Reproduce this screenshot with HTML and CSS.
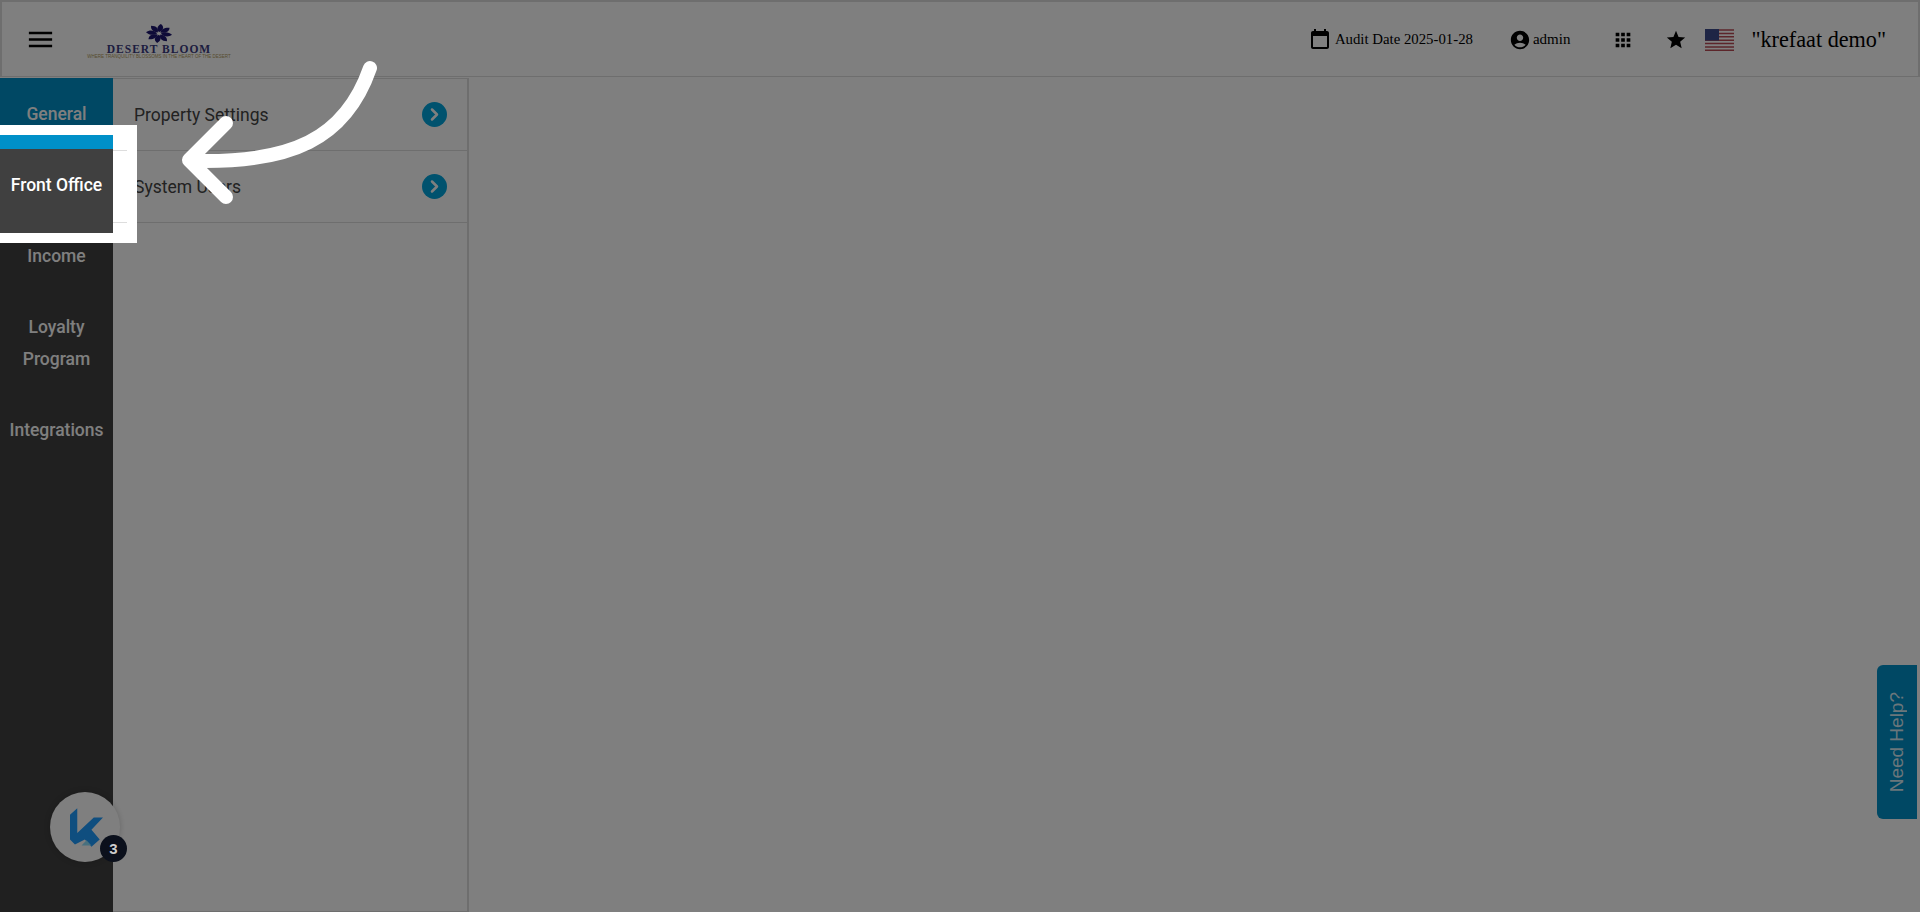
FILE: index.html
```html
<!DOCTYPE html>
<html lang="en">
<head>
  <meta charset="UTF-8">
  <title>Desert Bloom - Settings</title>
  <link rel="stylesheet" href="styles.css">
</head>
<body>
  <!-- Header -->
  <header class="topbar">
    <svg class="menu-icon" viewBox="0 0 24 24"><path d="M3 18h18v-2H3v2zm0-5h18v-2H3v2zm0-7v2h18V6H3z"/></svg>
    <div class="logo">
      <svg class="logo-flower" viewBox="-14 -14 28 28" preserveAspectRatio="none">
        <path d="M0-2C-3-6-2-11 2-14 6-10 5-5 0-2z"/>
        <path transform="rotate(45)" d="M0-2C-3-6-2-11 2-14 6-10 5-5 0-2z"/>
        <path transform="rotate(90)" d="M0-2C-3-6-2-11 2-14 6-10 5-5 0-2z"/>
        <path transform="rotate(135)" d="M0-2C-3-6-2-11 2-14 6-10 5-5 0-2z"/>
        <path transform="rotate(180)" d="M0-2C-3-6-2-11 2-14 6-10 5-5 0-2z"/>
        <path transform="rotate(225)" d="M0-2C-3-6-2-11 2-14 6-10 5-5 0-2z"/>
        <path transform="rotate(270)" d="M0-2C-3-6-2-11 2-14 6-10 5-5 0-2z"/>
        <path transform="rotate(315)" d="M0-2C-3-6-2-11 2-14 6-10 5-5 0-2z"/>
      </svg>
      <div class="logo-name">DESERT BLOOM</div>
      <div class="logo-tag">WHERE TRANQUILITY BLOSSOMS IN THE HEART OF THE DESERT</div>
    </div>
    <div class="topbar-right">
      <svg class="icon" viewBox="0 0 24 24"><path d="M19 3h-1V1h-2v2H8V1H6v2H5c-1.11 0-2 .9-2 2v14c0 1.1.89 2 2 2h14c1.1 0 2-.9 2-2V5c0-1.1-.9-2-2-2zm0 16H5V8h14v11z"/></svg>
      <span class="audit-date">Audit Date 2025-01-28</span>
      <svg class="icon-user" viewBox="0 0 24 24"><path d="M12 2C6.48 2 2 6.48 2 12s4.48 10 10 10 10-4.48 10-10S17.52 2 12 2zm0 4c1.93 0 3.5 1.57 3.5 3.5S13.93 13 12 13s-3.5-1.57-3.5-3.5S10.07 6 12 6zm0 14c-2.03 0-4.43-.82-6.14-2.88C7.55 15.8 9.68 15 12 15s4.45.8 6.14 2.12C16.43 19.18 14.03 20 12 20z"/></svg>
      <span class="user-name">admin</span>
      <svg class="icon-apps" viewBox="0 0 24 24"><path d="M4 8h4V4H4v4zm6 12h4v-4h-4v4zm-6 0h4v-4H4v4zm0-6h4v-4H4v4zm6 0h4v-4h-4v4zm6-10v4h4V4h-4zm-6 4h4V4h-4v4zm6 6h4v-4h-4v4zm0 6h4v-4h-4v4z"/></svg>
      <svg class="icon-star" viewBox="0 0 24 24"><path d="M12 17.27L18.18 21l-1.64-7.03L22 9.24l-7.19-.61L12 2 9.19 8.63 2 9.24l5.46 4.73L5.82 21z"/></svg>
      <svg class="flag" viewBox="0 0 29 22">
        <rect width="29" height="22" fill="#fff"/>
        <path d="M0 1h29M0 4.4h29M0 7.8h29M0 11.2h29M0 14.6h29M0 18h29M0 21.2h29" stroke="#b84a55" stroke-width="1.5"/>
        <rect width="14" height="11.5" fill="#3c4a8a"/>
      </svg>
      <span class="hotel-name">"krefaat demo"</span>
    </div>
  </header>

  <div class="layout">
    <!-- Sidebar -->
    <nav class="sidebar">
      <a class="side-item active">General</a>
      <a class="side-item current">Front Office</a>
      <a class="side-item">Income</a>
      <a class="side-item">Loyalty Program</a>
      <a class="side-item">Integrations</a>
    </nav>

    <!-- Settings list -->
    <div class="submenu">
      <div class="submenu-row">
        <span>Property Settings</span>
        <svg class="chevron" viewBox="0 0 25 25"><circle cx="12.5" cy="12.5" r="12.5"/><path d="M10 7.5l5 5-5 5"/></svg>
      </div>
      <div class="submenu-row">
        <span>System Users</span>
        <svg class="chevron" viewBox="0 0 25 25"><circle cx="12.5" cy="12.5" r="12.5"/><path d="M10 7.5l5 5-5 5"/></svg>
      </div>
    </div>
  </div>

  <div class="help-tab"><span>Need Help?</span></div>

  <div class="launcher">
    <svg class="launcher-logo" viewBox="0 0 100 117">
      <path d="M0 20L22 0V75L72 28H100L65 65L90 95L65 117L45 95L15 110L0 95z" fill="#1e9cff"/>
      <path d="M35 113L50 97L65 113z" fill="#8ee0ff"/>
    </svg>
  </div>

  <!-- Guide overlay -->
  <div class="spotlight"></div>
  <svg class="guide-arrow" viewBox="0 0 1920 912">
    <path d="M370 68C345 140 290 163 195 161M226 123L189 160L226 197"/>
  </svg>
  <div class="launcher-badge">3</div>
</body>
</html>
```

FILE: styles.css
```css
* {
  margin: 0;
  padding: 0;
  box-sizing: border-box;
}

html, body {
  height: 100%;
  overflow: hidden;
}

body {
  position: relative;
  background-color: #fff;
  font-family: "Liberation Serif", serif;
  color: #000;
}

/* Header */
.topbar {
  display: flex;
  align-items: center;
  height: 77px;
  margin-bottom: 1px;
  border: 2px solid #ddd;
  border-bottom-width: 1px;
  padding-left: 26px;
}

.menu-icon {
  width: 31px;
  height: 31px;
  margin-left: -3px;
  margin-top: 1px;
}

.logo {
  display: flex;
  flex-direction: column;
  align-items: center;
  width: 142px;
  margin-left: 32px;
  margin-top: 5px;
}

.logo-flower {
  width: 26px;
  height: 19px;
  fill: #1d1670;
}

.logo-name {
  font-size: 11.5px;
  line-height: 10px;
  margin-top: 1px;
  letter-spacing: 1px;
  font-weight: bold;
  color: #3a3a80;
  white-space: nowrap;
}

.logo-tag {
  font-family: "Liberation Sans", sans-serif;
  font-size: 4.5px;
  line-height: 6px;
  color: #b09a5a;
  white-space: nowrap;
}

.topbar-right {
  display: flex;
  align-items: center;
  margin-left: auto;
  padding-top: 1px;
  padding-right: 32px;
}

.icon {
  width: 24px;
  height: 24px;
}

.audit-date {
  font-size: 14.8px;
  margin-left: 3px;
}

.icon-user {
  width: 22px;
  height: 22px;
  margin-left: 36px;
}

.user-name {
  font-size: 15px;
  margin-left: 2px;
}

.icon-apps {
  width: 22px;
  height: 22px;
  margin-left: 42px;
}

.icon-star {
  width: 22px;
  height: 22px;
  margin-left: 31px;
}

.flag {
  width: 29px;
  height: 22px;
  margin-left: 18px;
}

.hotel-name {
  font-size: 22.2px;
  margin-left: 17px;
}

/* Sidebar */
.layout {
  display: flex;
  height: 834px;
}

.sidebar {
  width: 113px;
  background-color: #404040;
}

.side-item {
  display: block;
  padding: 20px 6px 19px;
  font-family: Roboto, sans-serif;
  font-size: 17.5px;
  font-weight: 500;
  line-height: 32px;
  text-align: center;
  color: #fff;
}

.side-item.active {
  background-color: #0090c8;
}

.side-item.current {
  background-color: #404040;
}

/* Settings list */
.submenu {
  width: 356px;
  border-top: 1px solid #ddd;
  border-right: 2px solid #ddd;
  border-bottom: 1px solid #ddd;
}

.submenu-row {
  display: flex;
  align-items: center;
  justify-content: space-between;
  height: 72px;
  padding: 0 20px 0 21px;
  border-bottom: 1px solid #ddd;
  font-family: Roboto, sans-serif;
  font-size: 17.5px;
  color: #444;
}

.chevron {
  width: 25px;
  height: 25px;
}

.chevron circle {
  fill: #00a4dc;
}

.chevron path {
  fill: none;
  stroke: #fff;
  stroke-width: 2.5;
  stroke-linecap: round;
  stroke-linejoin: round;
}

/* Need help tab */
.help-tab {
  position: absolute;
  top: 665px;
  right: 3px;
  display: flex;
  align-items: center;
  justify-content: center;
  width: 40px;
  height: 154px;
  border-radius: 6px 0 0 6px;
  background-color: #0090c8;
  font-family: "Liberation Sans", sans-serif;
  font-size: 19px;
  color: rgba(255, 255, 255, 0.85);
}

.help-tab span {
  writing-mode: vertical-rl;
  transform: rotate(180deg);
}

/* Chat launcher */
.launcher {
  position: absolute;
  left: 50px;
  top: 792px;
  display: flex;
  align-items: center;
  justify-content: center;
  width: 70px;
  height: 70px;
  border-radius: 50%;
  background-color: #fff;
  box-shadow: 0 0 6px rgba(0, 0, 0, 0.2);
}

.launcher-logo {
  width: 33px;
  height: 39px;
  margin-left: 3px;
}

.launcher-badge {
  position: absolute;
  left: 100px;
  top: 835px;
  width: 27px;
  height: 27px;
  border-radius: 50%;
  background-color: #0b101c;
  font-family: "Liberation Sans", sans-serif;
  font-size: 15px;
  font-weight: bold;
  line-height: 27px;
  text-align: center;
  color: #ccc;
}

/* Guide overlay */
.spotlight {
  position: absolute;
  left: -10px;
  top: 125px;
  width: 147px;
  height: 118px;
  border: 10px solid #fff;
  box-shadow: 0 0 0 3000px rgba(0, 0, 0, 0.5);
}

.guide-arrow {
  position: absolute;
  left: 0;
  top: 0;
  width: 1920px;
  height: 912px;
}

.guide-arrow path {
  fill: none;
  stroke: #fff;
  stroke-width: 14;
  stroke-linecap: round;
  stroke-linejoin: round;
}
```
